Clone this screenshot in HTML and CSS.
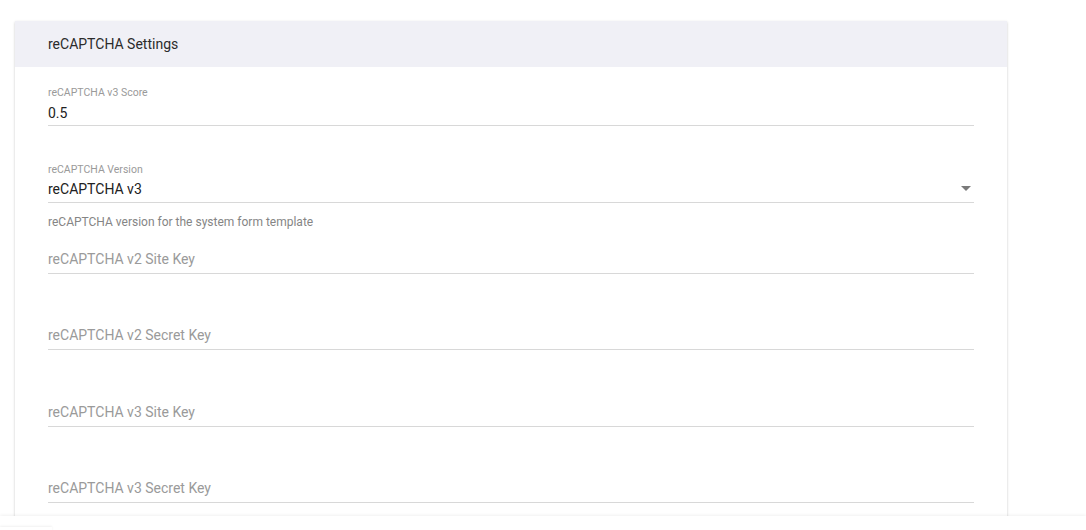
FILE: index.html
```html
<!DOCTYPE html>
<html lang="en">
<head>
<meta charset="utf-8">
<title>reCAPTCHA Settings</title>
<link rel="stylesheet" href="styles.css">
</head>
<body>
<div class="page">
  <section class="card">
    <header class="card-header">reCAPTCHA Settings</header>
    <div class="card-body">
      <div class="field">
        <label class="field-label">reCAPTCHA v3 Score</label>
        <div class="field-input"><span class="value">0.5</span></div>
      </div>

      <div class="field">
        <label class="field-label">reCAPTCHA Version</label>
        <div class="field-input select">
          <span class="value">reCAPTCHA v3</span>
          <span class="caret"></span>
        </div>
      </div>
      <p class="hint">reCAPTCHA version for the system form template</p>

      <div class="field after-hint">
        <div class="field-input"><span class="placeholder">reCAPTCHA v2 Site Key</span></div>
      </div>
      <div class="field">
        <div class="field-input"><span class="placeholder">reCAPTCHA v2 Secret Key</span></div>
      </div>
      <div class="field">
        <div class="field-input"><span class="placeholder">reCAPTCHA v3 Site Key</span></div>
      </div>
      <div class="field">
        <div class="field-input"><span class="placeholder">reCAPTCHA v3 Secret Key</span></div>
      </div>
    </div>
  </section>
</div>
<footer class="action-bar">
  <div class="action-btn"></div>
</footer>
</body>
</html>
```

FILE: styles.css
```css
html, body {
  margin: 0;
  padding: 0;
  height: 100%;
  overflow: hidden;
  background: #ffffff;
  font-family: Roboto, "Liberation Sans", Arial, sans-serif;
  color: #212121;
}

.page {
  padding: 21px 79px 0 15px;
}

.card {
  background: #ffffff;
  box-shadow: 0 1px 3px rgba(0, 0, 0, 0.12), 0 1px 2px rgba(0, 0, 0, 0.10);
}

.card-header {
  height: 46px;
  display: flex;
  align-items: center;
  padding: 0 33px;
  background: #f0f0f6;
  font-size: 14px;
  color: #2b2b2b;
}

.card-body {
  padding: 18px 33px 80px;
  display: flex;
  flex-direction: column;
}

.field {
  display: flex;
  flex-direction: column;
  padding-top: 16px;
  margin-bottom: 35.5px;
}

.field:first-child {
  padding-top: 0;
}

.field-label {
  height: 16px;
  line-height: 16px;
  font-size: 10.5px;
  color: #9a9a9a;
  margin-top: -16px;
}

.field:first-child .field-label {
  margin-top: 0;
}

.field-input {
  height: 24px;
  display: flex;
  align-items: center;
  border-bottom: 1px solid #d8d8d8;
  font-size: 14px;
}

.value {
  color: #212121;
  margin-top: -1px;
}

.placeholder {
  color: #9a9a9a;
  margin-top: -4px;
}

.select {
  justify-content: space-between;
}

.caret {
  width: 0;
  height: 0;
  margin-right: 3px;
  margin-top: -2px;
  border-left: 5px solid transparent;
  border-right: 5px solid transparent;
  border-top: 5px solid #7a7a7a;
}

.field:nth-child(2) {
  margin-bottom: 0;
}

.hint {
  margin: 12px 0 0;
  height: 14px;
  line-height: 14px;
  font-size: 12px;
  color: #858585;
}

.field.after-hint {
  margin-top: 4px;
}

.action-bar {
  position: fixed;
  left: 0;
  right: 0;
  bottom: 0;
  height: 14px;
  background: #ffffff;
  box-shadow: 0 -1px 3px rgba(0, 0, 0, 0.06);
}

.action-btn {
  position: absolute;
  left: 0;
  top: 11px;
  width: 52px;
  height: 20px;
  background: #ffffff;
  box-shadow: 0 -1px 2px rgba(0, 0, 0, 0.06);
}
```
